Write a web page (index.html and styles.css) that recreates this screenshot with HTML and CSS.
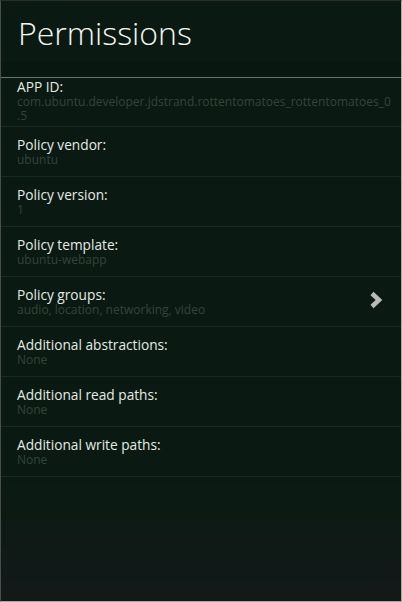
FILE: index.html
```html
<!DOCTYPE html>
<html>
<head>
<meta charset="utf-8">
<link rel="stylesheet" href="styles.css">
</head>
<body>
<div class="app">
  <header class="header">
    <h1 class="title">Permissions</h1>
  </header>
  <div class="band"></div>
  <ul class="list">
    <li class="row row-tall">
      <div class="label">APP ID:</div>
      <div class="value value-wrap"><span class="nowrap">com.ubuntu.developer.jdstrand.rottentomatoes_rottentomatoes_0</span><br>.5</div>
    </li>
    <li class="row">
      <div class="label">Policy vendor:</div>
      <div class="value">ubuntu</div>
    </li>
    <li class="row">
      <div class="label">Policy version:</div>
      <div class="value">1</div>
    </li>
    <li class="row">
      <div class="label">Policy template:</div>
      <div class="value">ubuntu-webapp</div>
    </li>
    <li class="row row-link">
      <div class="texts">
        <div class="label">Policy groups:</div>
        <div class="value">audio, location, networking, video</div>
      </div>
      <svg class="chevron" width="14" height="18" viewBox="0 0 14 18">
        <polyline points="3,2.5 10,9 3,15.5" fill="none" stroke="#b9bbb9" stroke-width="4.5" stroke-linejoin="miter" stroke-linecap="butt"/>
      </svg>
    </li>
    <li class="row">
      <div class="label">Additional abstractions:</div>
      <div class="value">None</div>
    </li>
    <li class="row">
      <div class="label">Additional read paths:</div>
      <div class="value">None</div>
    </li>
    <li class="row">
      <div class="label">Additional write paths:</div>
      <div class="value">None</div>
    </li>
  </ul>
</div>
</body>
</html>
```

FILE: styles.css
```css
html, body {
  margin: 0;
  padding: 0;
  background: #0a1a12;
}

.app {
  box-sizing: border-box;
  width: 402px;
  height: 602px;
  border-left: 1px solid #4a4d4a;
  border-top: 1px solid #2a2d2a;
  border-right: 1px solid #a9aaa6;
  border-bottom: 1px solid #a9aaa6;
  background: linear-gradient(to bottom, #0a1a12 0%, #0a1a12 80%, #131919 100%);
  font-family: "Open Sans", "DejaVu Sans", sans-serif;
  overflow: hidden;
}

.header {
  height: 61px;
  background: #0a1a12;
}

.title {
  margin: 0;
  padding: 11px 0 0 17px;
  font-weight: 300;
  font-size: 32px;
  line-height: 42px;
  color: #f4f6f2;
}

.band {
  height: 15px;
  background: #08170f;
  border-bottom: 1px solid #66766c;
}

.list {
  list-style: none;
  margin: 0;
  padding: 0;
}

.row {
  box-sizing: border-box;
  height: 50px;
  padding: 0 16px;
  border-bottom: 1px solid #1b2a21;
  display: flex;
  flex-direction: column;
  justify-content: center;
}

.row-tall {
  height: 49px;
  justify-content: flex-start;
}

.row-link {
  flex-direction: row;
  align-items: center;
  justify-content: space-between;
}

.texts {
  display: flex;
  flex-direction: column;
}

.label {
  font-size: 13.7px;
  line-height: 17px;
  color: #e6eae4;
}

.value {
  font-size: 12px;
  line-height: 14px;
  color: #34443a;
}

.nowrap {
  white-space: nowrap;
}

.chevron {
  display: block;
  margin: 0 2px 4px 0;
}
```
